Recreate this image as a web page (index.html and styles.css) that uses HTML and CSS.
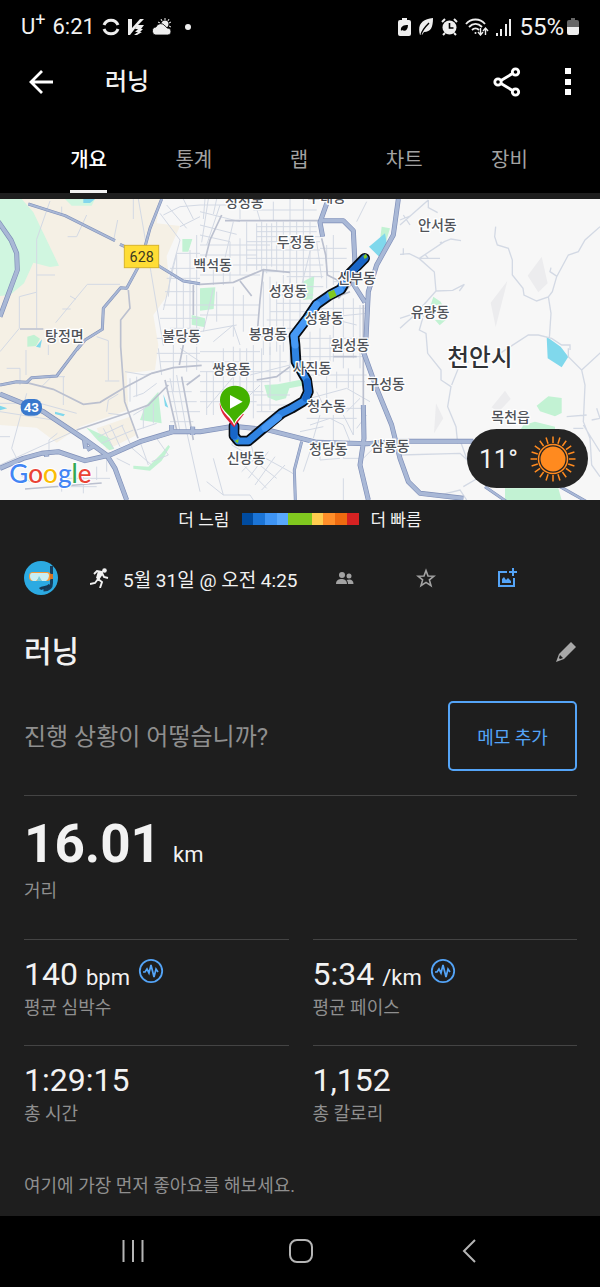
FILE: index.html
```html
<!DOCTYPE html>
<html lang="ko">
<head>
<meta charset="utf-8">
<meta name="viewport" content="width=device-width, initial-scale=1">
<title>러닝</title>
<link rel="stylesheet" href="styles.css">
</head>
<body>
<div class="status">
  <div class="status-left">
    <span>U<sup>+</sup></span>
    <span>6:21</span>
    <svg width="18" height="18" viewBox="0 0 18 18" fill="none" stroke="#eee" stroke-width="3"><path d="M2 7A7.500 7.500 0 0 1 16 7"/><path d="M2 11A7.500 7.500 0 0 0 16 11"/></svg>
    <svg width="18" height="18" viewBox="0 0 18 18" fill="#eee"><path d="M1 1h4v9L13 1h4l-6 6h6l-3 4h2l-3 3h2l-5 3H7l4-3H8l3-3H8l2-3L3 17H1z"/></svg>
    <svg width="20" height="18" viewBox="0 0 20 18"><g stroke="#eee" stroke-width="1"><path d="M13 0v2M9 1l1 2M17 1l-1 2M19 4l-2 1M19 9l-2-1M6 4l2 1"/></g><circle cx="13" cy="6" r="3.500" fill="#eee"/><path d="M5 17a4 4 0 0 1-1-8 5 5 0 0 1 9-1 4 4 0 0 1 2 2 3.500 3.500 0 0 1 1 7z" fill="#eee" stroke="#000" stroke-width=".8"/></svg>
    <span class="status-dot"></span>
  </div>
  <div class="status-right">
    <svg width="13" height="18" viewBox="0 0 13 18"><path d="M4 0h5v2h2a2 2 0 0 1 2 2v12a2 2 0 0 1-2 2H2a2 2 0 0 1-2-2V4a2 2 0 0 1 2-2h2z" fill="#eee"/><path d="M3 13c-1-5 3-6 7-6 0 5-3 7-6 5l3-3-4 4z" fill="#000"/></svg>
    <svg width="16" height="18" viewBox="0 0 16 18"><path d="M2 17C-1 7 4 1 15 0c0 9-2 14-9 14l-2 3z" fill="#eee"/><path d="M3 17c1-5 4-8 8-12" fill="none" stroke="#000" stroke-width="1.400"/></svg>
    <svg width="17" height="18" viewBox="0 0 17 18"><circle cx="8.500" cy="9.500" r="7" fill="#eee"/><path d="M1 4l3-3M13 1l3 3M4 15l-2 2M13 15l2 2" stroke="#eee" stroke-width="2"/><path d="M8.500 5v5h4" fill="none" stroke="#000" stroke-width="1.600"/></svg>
    <svg width="24" height="18" viewBox="0 0 24 18" fill="none" stroke="#eee" stroke-width="1.800"><path d="M1 6c5-6 14-6 19 0M4 9c4-4 9-4 13 0M7 12c2-2 5-2 7 0"/><circle cx="10.500" cy="15" r="1" fill="#eee" stroke="none"/><path d="M15.500 10v7M13 14l2.500 3 2.500-3M20.500 17v-6M18 13l2.500-3 2.500 3" stroke-width="1.400"/></svg>
    <svg width="16" height="18" viewBox="0 0 16 18" fill="#eee"><path d="M0 15h2v3H0zM4 11h2v7H4zM9 6h2v12H9zM13 1h2v17h-2z"/></svg>
    <span class="charge">55%<svg width="12" height="18" viewBox="0 0 12 18"><path d="M4 0h4v2h2a2 2 0 0 1 2 2v5H0V4a2 2 0 0 1 2-2h2z" fill="#666"/><path d="M0 9h12v6a2 2 0 0 1-2 2H2a2 2 0 0 1-2-2z" fill="#eee"/></svg></span>
  </div>
</div>

<header class="appbar">
  <button class="icon-btn" aria-label="뒤로"><svg width="24" height="24" viewBox="0 0 24 24" fill="none" stroke="#fff" stroke-width="2.800"><path d="M13 1L2 12l11 11M2 12h22"/></svg></button>
  <h1>러닝</h1>
  <button class="icon-btn" aria-label="공유"><svg width="28" height="30" viewBox="0 0 28 30" fill="none" stroke="#fff" stroke-width="2.800"><circle cx="5" cy="15" r="3.200"/><circle cx="22.500" cy="5" r="3.200"/><circle cx="22.500" cy="25" r="3.200"/><path d="M8 13.500L19.500 6.500M8 16.500l11.500 7"/></svg></button>
  <button class="icon-btn" aria-label="더보기"><svg width="6" height="28" viewBox="0 0 6 28" fill="#fff"><path d="M0 0h6v6H0zM0 11h6v6H0zM0 21h6v6H0z"/></svg></button>
</header>

<nav class="tabs">
  <a href="#overview" class="active" aria-current="page"><span>개요</span></a>
  <a href="#stats"><span>통계</span></a>
  <a href="#laps"><span>랩</span></a>
  <a href="#charts"><span>차트</span></a>
  <a href="#gear"><span>장비</span></a>
</nav>

<main>
  <div class="map-wrap">
    <svg class="map" viewBox="0 12 1800 903" role="img" aria-label="러닝 경로 지도">
      <rect y="12" width="1800" height="903" fill="#f7f7f7"/>
      <path fill="#f5f0e5" d="M0 12H480L470 85l70 8-40 90 10 107-50 70 15 90-10 75-85 10 5 110-145 50-70 48-60-45-110-8-20-90z"/>
      <path fill="#f5f0e5" d="M290 700l100-35 20 55-90 45z"/>
      <path fill="#d0f6e0" d="M0 12h65l35 40 77 160-27 4-50-13-28 62-42 35-30 3z"/>
      <path fill="#d0f6e0" d="M195 12h90l-10 20-60 0z"/>
      <path fill="#84d7ec" d="M250 12h35l-15 12h-20z"/>
      <g fill="#c2f2d3">
        <path d="M547 132h30l-12 38h-18zM600 280l46-3-5 65-41 5zM575 360l40 10v27l-40-8zM82 425l20-6 18 12-12 22-26 2z"/>
        <path d="M908 260l35-18-5 70-28 3zM1145 95l25 5-12 40-18-5z"/>
        <path d="M793 570l40-2 65-13 20 15-50 10-10 30-30 7-25-10z"/>
        <path d="M1300 305l22 15 5 10h-35zM1305 375h32l-18 16zM1610 632l35-28 40 5v45l-20 10-45-15zM1570 690l35-10 60 15v20h-110zM1515 880h160l10 35h-170z"/>
        <path d="M475 590l5 50 5 45-30-5-35-5 15-40zM258 697l80 37-15-3 20 30-15 5-35-30zM400 812l45 3 40-40 20-25 5 5-25 42-35 30-50-6z"/>
      </g>
      <path fill="#ececee" d="M1625 185l-42 57 32 50 28-27zM1522 258l-50 65 15 73zM1515 587l-40 50 20 15 37-40zM1308 625l22 45-28 45z"/>
      <g fill="#80d8ec"><path d="M1155 115l-48 40 35 35 20-35zM1640 425l42 30 23 30-20 32-42-27zM490 598l15 40-10-5zM165 650l30 8-5 6-25-7zM0 632l22 8-22 6zM108 455l18-22-5 25z"/></g>

      <g fill="none" stroke="#d3d9e4" stroke-width="3">
        <!-- western lanes -->
        <path d="M150 18l-40 115v267M110 240h55M58 400V305l50-13M58 400L0 470M260 60l-30 65h-27M353 75l-12 60M400 12v60M185 35v20M360 268h-98l-95 115M187 342h25M210 303l18 10M290 425l35 12v120M78 465v75M80 595L35 760l15 30M0 625h120l110 30M0 810l230-105M147 785v-50l25-20M20 520h40v50M145 450v30M415 12l38 220 37 220M195 545h-40l-30 30M190 545v85M315 558h43"/>
        <path d="M0 650l160 25M0 725h30M60 840l30 20M320 650l5-35 30-18M325 655l40 5M180 850h150M185 830v60M250 835v60M290 815v40M320 790v40M160 875h130"/>
        <path d="M310 700l30 60M330 690l30 65M295 725l75-35M305 745l95-40M365 690l25 55"/>
        <!-- downtown grid -->
        <path d="M480 55l60 80-30 110-5 60M490 60l50-25 60-5M500 30l60 70M530 175h70M530 175l-40 170M510 220h90M500 250h100M495 290h90M490 330h110M480 370h120M510 400h90M550 265v160M530 180v250M570 165v250M590 120v330M540 95l60-30M550 12l30 60M470 430h130"/>
        <path d="M600 50l120 30M600 90l110 28M600 120l90 20M625 12l-20 130M660 30l-40 120M700 80l-30 130M600 150h210M600 180h170M640 200v70M670 220v50M600 240h180M620 210h180M690 140v120M720 130v110M740 80v150M640 280l-30 130M600 330h180M600 360h175M650 290v90M700 275v150M730 300v110M600 410l110-20M640 440l60-50 20 60"/>
        <path d="M770 85v140M785 80v145M800 85v150M815 85v130M830 80v150M850 80v155M870 80v200M890 80v200M910 80v200M930 80v170M770 95h180M770 110h180M770 125h190M740 140h220M740 165h220M740 190h220M740 210h230M790 230h180M860 245h110M850 275h120M840 300h100M830 325h110M810 350h140M800 375h100M790 400h100M780 425h100M790 260v220M810 245v235M830 260v210M850 240v230M870 250v170M900 290v110M940 130l-40 160M950 140l15 110M980 150v130M1000 120v150M960 160h80M950 190h90M970 230h80M1000 260h50"/>
        <path d="M615 12l-5 60M650 12l-10 45M720 12v60M765 25l15 50M820 20v55M870 12v65M910 12v65M600 30h100M760 45h190M1070 80l30-60M930 310l60 60 80 20M960 340h140M950 370l150-15M1000 310v190M1030 310v210M1060 310v180M1080 330v190M900 430h190M910 460h190M900 485h200M930 410v100M960 400v120M990 420v90"/>
        <path d="M475 460l10 80M470 475h130M520 450v140M480 500h120M540 460l60 40M560 480v50M590 455v70M600 470h180M600 500h260M600 530h270M600 560h210M600 590h190M600 620h170M620 530v130M640 500v160M670 460v180M700 455v150M720 460v170M740 460v180M760 450v220M785 460v190M810 455v190M840 450v110M870 460v100M620 640l110-130M700 650l80-80M760 600h110M770 630h120M770 650h90M750 540l120-30"/>
        <path d="M930 540h170M935 560h160M930 610l110-30 70 40M940 640h150M950 590l30 60M980 530v120M1010 530v50M1045 520v60M1060 540v180M930 690l60-20 40 20 20 50M960 660l-20 70M1000 660v75M1030 660l30 60M920 670h150M900 710l70-15M1070 700l30-40M1040 650l40-40"/>
        <path d="M375 530l60 10 60-15M400 605l30-10 40-30M400 660l50-30M390 550v70M410 545v60M500 560h70M500 590h75M510 620h80M520 650h80M510 680h70M510 550l30 160M530 540l30 170M410 705l60-20M430 640v60M460 625v60M385 750l70 60M420 740l25 70M350 790l40 20M470 730l35 50-50 20M560 710l40 180"/>
        <path d="M725 830l60-60M745 850l60-80M765 870l60-85M785 885l70-75M720 800l80 80M740 780l90 70M760 770l110 60M730 770l-35-20 10-25M750 735l10 40h30M640 790l30 110M620 860l50 40h80l10 15M870 830l15 10M930 770l-20 60M960 745v50l60-5M1030 750v40h50M1090 790l30-30h90M1030 850v65"/>
        <!-- eastern lanes -->
        <path stroke-width="4" d="M1285 15l-85 75M1285 15v23l28 15M1200 75l30-12M1210 60l20 30M1200 178l28-2 30 15 45 40 5 57-40 45-10 20 20 15M1258 190l75-50 20-8 30 5M1320 145l5-5M1260 190h60M1275 178l10 12M1308 288l50-2 35-18-15 20M1200 370l60-20M1200 400l50-45M1210 160v20M1268 370l-10 35 20 10 5 60 40 50v30l30 20-10 60 25 60 5 50M1355 570l20-50 30-20"/>
        <path stroke-width="4" d="M1487 95l-3 30 8 25 33 10 12 35v45l32 40 3 20 38 18 35-12 12-16 13-45 35-65 30-10 20-35 45-40M1645 305l8 50-5 75M1500 475l85-55h30l40 10 30 20h25v15M1470 245M1672 245l-22-15 3-12M1705 460v25l40 40 10 45-5 110 20 50 5 80 25 35M1745 525l60-55M1700 665l60-5M1790 640l10 30-25 5M1720 700h30M1750 690l50 80M1380 735l25 70 20 35M1400 915l-20-30-80 20M1200 780l180-5 70 65-60 35"/>
      </g>

      <g fill="none" stroke="#bbc0cf" stroke-width="5">
        <path d="M665 60l-35 75-15 60M675 77h285M600 268l100-6 90-38 80 8M720 258l35 45M790 225l-10 90-10 120M385 285l5 55-28 35v80l12 165 40 110M80 563l80 20 90 45 50-6 70-42 85-45 65-17 85-7M230 705l150-50 65-25 60-60M495 555l35 150M545 545l35 190M580 360v-90M965 130l12 50 5 60 40 20M1000 310l50-20M770 555l60-10 40-30M600 540l-40 30M60 402h70M75 882l230-18M550 450l-12 60M1090 330v300M1015 310l55-60M1000 485h70"/>
      </g>

      <g fill="none" stroke-linejoin="round">
        <g stroke="#7f8fb8">
          <g stroke-width="9"><path d="M85 27l110 35 150 75M360 148l65 30 55 37 70 43 50 8M485 12l-35 88-15 55-20 60-35 65-18-2-52 62-3 63-52 32-25 30M240 450l-70 93-75 5-15 14-30-2-50 10M905 740l-22 85 3 90M1455 875l65 45M1680 875l80 45"/></g>
          <g stroke-width="15"><path d="M-5 80l38 55 17 40 2 50-52 140M0 597l130 53 120 80 70 50 25 40 35 95M0 820l70-30 55-15 50-5 80 27 75-17 90-40 100-30h80l100-16 100 10 150 38 150 4 100-7h220M1195 12l-15 108-50 90-25 80-8 160-7 20 40 110 45 110 25 100 25 70 35 35 130 15M960 77h70l30 30 5 100-5 60 35 55M985 12l-25 70 8 43M1090 630l2 100-12 80 25 105M253 730l4 30M283 752l-22 12M138 770l2 15M515 690v20M578 695v25"/></g>
        </g>
        <g stroke="#a9b8d6">
          <g stroke-width="6"><path d="M85 27l110 35 150 75M360 148l65 30 55 37 70 43 50 8M485 12l-35 88-15 55-20 60-35 65-18-2-52 62-3 63-52 32-25 30M240 450l-70 93-75 5-15 14-30-2-50 10M905 740l-22 85 3 90M1455 875l65 45M1680 875l80 45"/></g>
          <g stroke-width="11"><path d="M-5 80l38 55 17 40 2 50-52 140M0 597l130 53 120 80 70 50 25 40 35 95M0 820l70-30 55-15 50-5 80 27 75-17 90-40 100-30h80l100-16 100 10 150 38 150 4 100-7h220M1195 12l-15 108-50 90-25 80-8 160-7 20 40 110 45 110 25 100 25 70 35 35 130 15M960 77h70l30 30 5 100-5 60 35 55M985 12l-25 70 8 43M1090 630l2 100-12 80 25 105M253 730l4 30M283 752l-22 12M138 770l2 15M515 690v20M578 695v25"/></g>
        </g>
      </g>

      <g fill="none" stroke-linecap="round" stroke-linejoin="round">
        <path stroke="#080d14" stroke-width="32" d="M1094 190l-44 45-27 48-33 17-40 28-28 42-40 52 3 28 3 50 32 55 5 35-13 28-37 22-30 15-55 45-45 38h-30l-13-16v-30"/>
        <path stroke="#2f83e2" stroke-width="21" d="M1094 190l-44 45-27 48-33 17-40 28-28 42-40 52 3 28 3 50 32 55 5 35-13 28-37 22-30 15-55 45-45 38h-30l-13-16v-30"/>
        <path stroke="#1866c8" stroke-width="21" d="M1094 190l-44 45M922 560l3 30-7 20M702 722v-30"/>
        <path stroke="#4698f4" stroke-width="21" d="M1020 285l-30 15M950 328l-28 42-40 52 3 28M835 667l-40 32"/>
      </g>
      <path fill="#80c81f" d="M984 292l18-8 8 18-20 11zM1090 184l8-8 4 11-8 5zM704 738l12-6-2 13z"/>

      <g class="place">
        <text x="193" y="438">탕정면</text><text x="545" y="438">불당동</text><text x="638" y="224">백석동</text>
        <text x="733" y="36">성성동</text><text x="980" y="22">부대동</text><text x="888" y="157">두정동</text>
        <text x="1070" y="263">신부동</text><text x="864" y="303">성정동</text><text x="973" y="383">성황동</text>
        <text x="804" y="431">봉명동</text><text x="1050" y="464">원성동</text><text x="1312" y="104">안서동</text>
        <text x="1290" y="367">유량동</text><text x="695" y="538">쌍용동</text><text x="936" y="535">사직동</text>
        <text x="1157" y="582">구성동</text><text x="980" y="647">청수동</text><text x="738" y="804">신방동</text>
        <text x="985" y="776">청당동</text><text x="1171" y="768">삼룡동</text><text x="1532" y="680">목천읍</text>
        <text class="city" x="1440" y="512">천안시</text>
      </g>

      <rect x="373" y="151" width="103" height="67" fill="#ffdd35" stroke="#d8b42c" stroke-width="3"/>
      <text class="shield" x="425" y="200">628</text>
      <rect x="62" y="612" width="64" height="50" rx="23" fill="#3878cd"/>
      <text class="shield shield-blue" x="94" y="651">43</text>

      <path fill="#e0243c" d="M659 625c0 30 25 52 43 72l30-40-10 0-25 18-34-45z"/>
      <path fill="#fff" d="M703 692c-10-27-43-39-43-74h86c0 35-33 47-43 74z"/>
      <path fill="#43b100" d="M703 686c-8-27-43-39-43-71a45 43 0 0 1 90 0c0 32-38 44-47 71z"/>
      <path fill="#fff" d="M690 600l38 20-38 21z"/>

      <text class="google" x="28" y="865"><tspan fill="#4285f4">G</tspan><tspan fill="#ea4335">o</tspan><tspan fill="#fbbc05">o</tspan><tspan fill="#4285f4">g</tspan><tspan fill="#34a853">l</tspan><tspan fill="#ea4335">e</tspan></text>
    </svg>
    <div class="weather">
      <span>11°</span>
      <svg width="46" height="46" viewBox="-23 -23 46 46"><circle r="12.500" fill="#ff8a1f"/><circle r="14.500" fill="none" stroke="#ff8a1f" stroke-width="1.500"/><g stroke="#ff8a1f" stroke-width="1.500"><path id="ray" d="M0-16v-6.500M0 16v6.500M16 0h6.500M-16 0h-6.500"/><use href="#ray" transform="rotate(18)"/><use href="#ray" transform="rotate(36)"/><use href="#ray" transform="rotate(54)"/><use href="#ray" transform="rotate(72)"/></g></svg>
    </div>
  </div>

  <div class="legend">
    <span>더 느림</span>
    <div class="scale"><i class="c1"></i><i class="c2"></i><i class="c3"></i><i class="c4"></i><i class="c5"></i><i class="c5"></i><i class="c6"></i><i class="c7"></i><i class="c8"></i><i class="c9"></i></div>
    <span>더 빠름</span>
  </div>

  <section class="meta">
    <svg class="avatar" width="34" height="34" viewBox="0 0 34 34"><circle cx="17" cy="17" r="17" fill="#2caae2"/><path d="M27.500 5v17c0 5-3 7-8 7" fill="none" stroke="#173e5c" stroke-width="3"/><path d="M16 28c3-3 7 0 10-4" stroke="#163853" stroke-width="3" fill="none"/><rect x="5" y="11" width="22" height="9" rx="4" fill="#f59a3a"/><path d="M26 13h3v5h-3z" fill="#d77424"/><path d="M8 12h15q2 0 2 3t-3 5h-4l-3-3-3 3H9q-3-1-3-5 0-3 2-3z" fill="#c9eef3"/><path d="M13 20l2-5 3 5z" fill="#79cbd9"/></svg>
    <svg class="runner" width="19" height="20" viewBox="0 0 19 20"><circle cx="14.500" cy="2.500" r="2.300" fill="#f2f2f2"/><path d="M4 6l3-3 5 1-4 7 4 3-2 6M8 11l-3 4-5 1M12 5l2 4 4 1" fill="none" stroke="#f2f2f2" stroke-width="1.900"/><path d="M8 3l4 1 1 2-4 6-3-2z" fill="#f2f2f2"/></svg>
    <time>5월 31일 @ 오전 4:25</time>
    <div class="actions">
      <button aria-label="공개 범위"><svg width="18" height="14" viewBox="0 0 18 14" fill="#a3a3a3"><circle cx="6" cy="4" r="3"/><circle cx="13" cy="5" r="2.500"/><path d="M0 13c0-4 3-5 5.500-5S11 9 11 13zM12 13c0-2-.5-3-1.500-4 4-1.500 7 0 7 4z"/></svg></button>
      <button aria-label="즐겨찾기"><svg width="20" height="20" viewBox="0 0 20 20" fill="none" stroke="#a3a3a3" stroke-width="1.600"><path d="M10 2.500l2 5.500 6 .2-4.600 3.700 1.600 5.800-5-3.300-5 3.300 1.600-5.800L2 8.200 8 8z"/></svg></button>
      <button aria-label="사진 추가"><svg width="20" height="20" viewBox="0 0 20 20" fill="none" stroke="#54a4f7" stroke-width="2"><path d="M10 4H2v14h15v-8M16 0v8M12 4h8"/><path d="M5 15v-4l2-2 2 3 2-2 3 3v2z" fill="#54a4f7" stroke="none"/></svg></button>
    </div>
  </section>

  <section class="title-row">
    <h2>러닝</h2>
    <button class="edit" aria-label="이름 수정"><svg width="20" height="20" viewBox="0 0 20 20"><path d="M15 0l5 5L8 17l-8 3 3-8z" fill="#a8a8a8"/><path d="M4 13l3 3-3 1-1-1z" fill="#1e1e1e"/></svg></button>
  </section>

  <section class="note">
    <p>진행 상황이 어떻습니까?</p>
    <button class="memo">메모 추가</button>
  </section>

  <section class="distance">
    <div class="value"><strong>16.01</strong><span class="unit">km</span></div>
    <div class="label">거리</div>
  </section>

  <section class="metrics">
    <div class="metric">
      <div class="value"><span>140</span><span class="unit">bpm</span><button class="wave" aria-label="심박수 차트"><svg width="26" height="26" viewBox="0 0 26 26" fill="none" stroke="#54a4f7"><circle cx="13" cy="13" r="11.200" stroke-width="1.800"/><path d="M5 14h2l2-3 2 4 2-8 3 12 2-8 2 3" stroke-width="1.700"/></svg></button></div>
      <div class="label">평균 심박수</div>
    </div>
    <div class="metric">
      <div class="value"><span>5:34</span><span class="unit">/km</span><button class="wave" aria-label="페이스 차트"><svg width="26" height="26" viewBox="0 0 26 26" fill="none" stroke="#54a4f7"><circle cx="13" cy="13" r="11.200" stroke-width="1.800"/><path d="M5 14h2l2-3 2 4 2-8 3 12 2-8 2 3" stroke-width="1.700"/></svg></button></div>
      <div class="label">평균 페이스</div>
    </div>
    <div class="metric">
      <div class="value"><span>1:29:15</span></div>
      <div class="label">총 시간</div>
    </div>
    <div class="metric">
      <div class="value"><span>1,152</span></div>
      <div class="label">총 칼로리</div>
    </div>
  </section>

  <p class="likes">여기에 가장 먼저 좋아요를 해보세요.</p>
</main>

<footer class="sysnav">
  <button aria-label="최근 앱"><svg width="22" height="22" viewBox="0 0 22 22" stroke="#b5b5b5" stroke-width="2"><path d="M1.500 0v22M11 0v22M20.500 0v22"/></svg></button>
  <button aria-label="홈"><svg width="24" height="24" viewBox="0 0 24 24" fill="none" stroke="#b5b5b5" stroke-width="2"><rect x="1" y="1" width="22" height="22" rx="7"/></svg></button>
  <button aria-label="이전"><svg width="14" height="24" viewBox="0 0 14 24" fill="none" stroke="#b5b5b5" stroke-width="2"><path d="M13 1L2 12l11 11"/></svg></button>
</footer>
</body>
</html>
```

FILE: styles.css
```css
* {
  box-sizing: border-box;
}

body {
  margin: 0;
  background: #000;
  color: #f2f2f2;
  font-family: Roboto, "Noto Sans CJK KR", sans-serif;
}

h1, h2, p {
  margin: 0;
}

button {
  display: flex;
  align-items: center;
  justify-content: center;
  padding: 0;
  border: 0;
  background: none;
  color: inherit;
  font: inherit;
}

svg {
  display: block;
  flex-shrink: 0;
}

.status {
  display: flex;
  justify-content: space-between;
  height: 54px;
  padding: 0 21px;
  font-size: 22px;
  line-height: 54px;
}

.status-left,
.status-right {
  display: flex;
  align-items: center;
  gap: 7px;
}

.status sup {
  font-size: 18px;
  line-height: 1;
}

.status-dot {
  width: 6px;
  height: 6px;
  margin-left: 6px;
  border-radius: 50%;
  background: #eee;
}

.charge {
  display: flex;
  align-items: center;
  gap: 3px;
  font-size: 24px;
}

.appbar {
  display: flex;
  align-items: center;
  height: 56px;
  padding: 0 8px 0 17px;
}

.appbar h1 {
  flex: 1;
  padding-left: 40px;
  font-size: 24px;
  font-weight: 500;
  line-height: 32px;
}

.icon-btn {
  width: 48px;
  height: 48px;
}

.icon-btn + .icon-btn {
  margin-left: 13px;
}

.tabs {
  display: flex;
  padding: 38px 38px 0 36px;
}

.tabs a {
  display: flex;
  flex: 1;
  justify-content: center;
  color: #a3a3a3;
  font-size: 20px;
  line-height: 24px;
  text-decoration: none;
}

.tabs span {
  padding-bottom: 18px;
  border-bottom: 3px solid transparent;
}

.tabs .active {
  color: #fff;
  font-weight: 500;
}

.tabs .active span {
  border-color: #f2f2f2;
}

main {
  padding-top: 6px;
  background: #1e1e1e;
}

.map-wrap {
  position: relative;
}

.map {
  width: 100%;
  height: auto;
}

.place text {
  fill: #505359;
  stroke: #fff;
  stroke-width: 8px;
  stroke-linejoin: round;
  paint-order: stroke;
  font-family: "Noto Sans CJK KR", sans-serif;
  font-size: 42px;
  font-weight: 500;
  text-anchor: middle;
}

.place .city {
  fill: #303236;
  font-size: 71px;
}

.shield {
  fill: #3c3820;
  font-size: 43px;
  font-weight: 400;
  text-anchor: middle;
}

.shield-blue {
  fill: #fff;
  font-size: 40px;
  font-weight: 700;
}

.google {
  font-family: Lato, sans-serif;
  font-size: 78px;
  font-weight: 500;
  stroke: #fff;
  stroke-width: 6px;
  paint-order: stroke;
}

.weather {
  position: absolute;
  right: 12px;
  bottom: 12px;
  display: flex;
  align-items: center;
  gap: 12px;
  height: 59px;
  padding: 0 12px;
  border-radius: 30px;
  background: #242424;
  font-size: 26px;
}

.legend {
  display: flex;
  align-items: center;
  justify-content: center;
  gap: 12px;
  height: 37px;
  font-size: 17px;
}

.scale {
  display: flex;
  width: 117px;
  height: 12px;
}

.scale i {
  flex: 1;
}

.c1 { background: #004b9f; }
.c2 { background: #1b74d6; }
.c3 { background: #3e94f4; }
.c4 { background: #58a8fc; }
.c5 { background: #80c81f; }
.c6 { background: #ffcc4e; }
.c7 { background: #ff8e29; }
.c8 { background: #ee6b10; }
.c9 { background: #d62222; }

.meta {
  display: flex;
  align-items: center;
  height: 48px;
  margin-top: 17px;
  padding: 0 53px 0 24px;
  font-size: 19px;
}

.runner {
  margin: 0 14px 0 32px;
}

.actions {
  display: flex;
  margin-left: auto;
}

.actions button {
  width: 81px;
  height: 48px;
}

.title-row {
  display: flex;
  align-items: center;
  justify-content: space-between;
  margin-top: 26px;
  padding: 0 24px;
}

.title-row h2 {
  font-size: 30px;
  font-weight: 500;
  line-height: 48px;
}

.edit {
  height: 48px;
}

.note {
  display: flex;
  align-items: center;
  justify-content: space-between;
  margin: 25px 23px 0 24px;
  padding-bottom: 24px;
  border-bottom: 1px solid #444;
  color: #8f8f8f;
  font-size: 24px;
}

.note p {
  padding-bottom: 3px;
}

.memo {
  width: 129px;
  height: 70px;
  border: 2px solid #54a4f7;
  border-radius: 5px;
  color: #54a4f7;
  font-size: 18px;
}

.distance {
  padding: 22px 24px 36px;
}

.value {
  display: flex;
  align-items: baseline;
  gap: 8px;
  font-size: 32px;
  line-height: 40px;
}

.distance .value {
  gap: 12px;
  line-height: 52px;
}

.value strong {
  font-size: 53px;
  font-weight: 700;
}

.value .unit {
  font-size: 22px;
  line-height: 24px;
}

.label {
  margin-top: 2px;
  color: #8f8f8f;
  font-size: 18px;
  line-height: 24px;
}

.distance .label {
  margin-top: 9px;
}

.metrics {
  display: grid;
  grid-template-columns: 1fr 1fr;
  column-gap: 24px;
  padding: 0 23px 0 24px;
}

.metric {
  height: 106px;
  padding-top: 14px;
  border-top: 1px solid #444;
}

.wave {
  align-self: flex-start;
  padding-top: 4px;
}

.likes {
  padding: 23px 24px 18px;
  color: #8f8f8f;
  font-size: 18px;
  line-height: 24px;
}

.sysnav {
  display: flex;
  padding: 0 47px 0 49px;
}

.sysnav button {
  flex: 1;
  height: 70px;
}
```
